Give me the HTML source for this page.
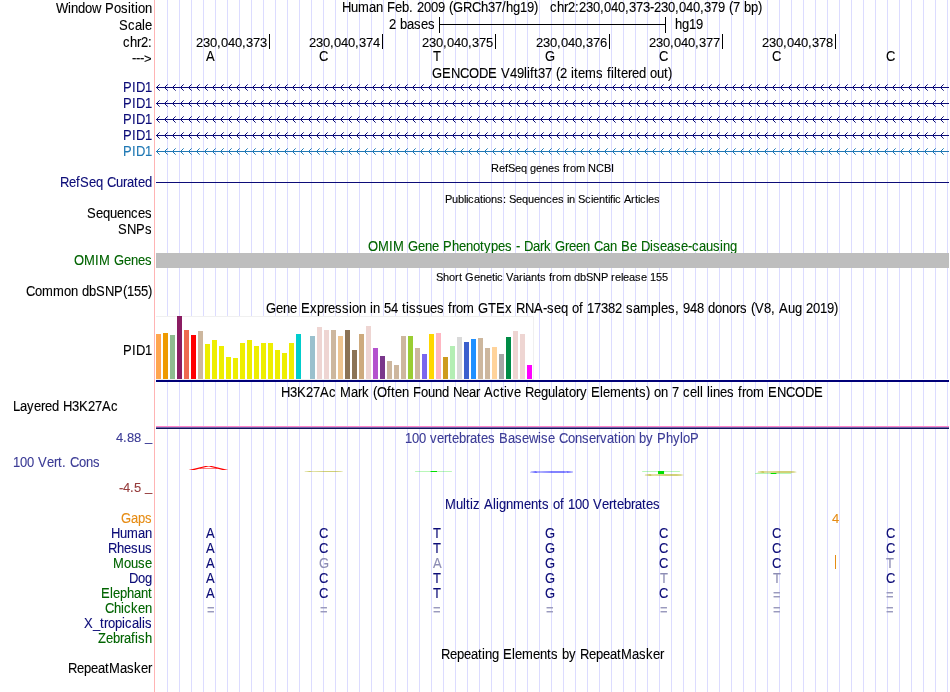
<!DOCTYPE html>
<html><head><meta charset="utf-8"><title>UCSC Genome Browser</title>
<style>html,body{margin:0;padding:0;background:#fff}svg{display:block}#w{width:950px;height:692px;will-change:transform;overflow:hidden}text{font-family:"Liberation Sans",sans-serif;font-size:13px;stroke-width:.1px;white-space:pre}.s{font-size:11px}</style>
</head><body><div id="w">
<svg width="950" height="692" viewBox="0 0 950 692">
<rect width="950" height="692" fill="#fff"/>
<g fill="#dcdcff" shape-rendering="crispEdges">
<rect x="167" y="0" width="1" height="692"/>
<rect x="179" y="0" width="1" height="692"/>
<rect x="191" y="0" width="1" height="692"/>
<rect x="203" y="0" width="1" height="692"/>
<rect x="215" y="0" width="1" height="692"/>
<rect x="227" y="0" width="1" height="692"/>
<rect x="239" y="0" width="1" height="692"/>
<rect x="251" y="0" width="1" height="692"/>
<rect x="263" y="0" width="1" height="692"/>
<rect x="275" y="0" width="1" height="692"/>
<rect x="287" y="0" width="1" height="692"/>
<rect x="299" y="0" width="1" height="692"/>
<rect x="311" y="0" width="1" height="692"/>
<rect x="323" y="0" width="1" height="692"/>
<rect x="335" y="0" width="1" height="692"/>
<rect x="347" y="0" width="1" height="692"/>
<rect x="359" y="0" width="1" height="692"/>
<rect x="371" y="0" width="1" height="692"/>
<rect x="383" y="0" width="1" height="692"/>
<rect x="395" y="0" width="1" height="692"/>
<rect x="407" y="0" width="1" height="692"/>
<rect x="419" y="0" width="1" height="692"/>
<rect x="431" y="0" width="1" height="692"/>
<rect x="443" y="0" width="1" height="692"/>
<rect x="455" y="0" width="1" height="692"/>
<rect x="467" y="0" width="1" height="692"/>
<rect x="479" y="0" width="1" height="692"/>
<rect x="491" y="0" width="1" height="692"/>
<rect x="503" y="0" width="1" height="692"/>
<rect x="515" y="0" width="1" height="692"/>
<rect x="527" y="0" width="1" height="692"/>
<rect x="539" y="0" width="1" height="692"/>
<rect x="551" y="0" width="1" height="692"/>
<rect x="563" y="0" width="1" height="692"/>
<rect x="575" y="0" width="1" height="692"/>
<rect x="587" y="0" width="1" height="692"/>
<rect x="599" y="0" width="1" height="692"/>
<rect x="611" y="0" width="1" height="692"/>
<rect x="623" y="0" width="1" height="692"/>
<rect x="635" y="0" width="1" height="692"/>
<rect x="647" y="0" width="1" height="692"/>
<rect x="659" y="0" width="1" height="692"/>
<rect x="671" y="0" width="1" height="692"/>
<rect x="683" y="0" width="1" height="692"/>
<rect x="695" y="0" width="1" height="692"/>
<rect x="707" y="0" width="1" height="692"/>
<rect x="719" y="0" width="1" height="692"/>
<rect x="731" y="0" width="1" height="692"/>
<rect x="743" y="0" width="1" height="692"/>
<rect x="755" y="0" width="1" height="692"/>
<rect x="767" y="0" width="1" height="692"/>
<rect x="779" y="0" width="1" height="692"/>
<rect x="791" y="0" width="1" height="692"/>
<rect x="803" y="0" width="1" height="692"/>
<rect x="815" y="0" width="1" height="692"/>
<rect x="827" y="0" width="1" height="692"/>
<rect x="839" y="0" width="1" height="692"/>
<rect x="851" y="0" width="1" height="692"/>
<rect x="863" y="0" width="1" height="692"/>
<rect x="875" y="0" width="1" height="692"/>
<rect x="887" y="0" width="1" height="692"/>
<rect x="899" y="0" width="1" height="692"/>
<rect x="911" y="0" width="1" height="692"/>
<rect x="923" y="0" width="1" height="692"/>
<rect x="935" y="0" width="1" height="692"/>
<rect x="947" y="0" width="1" height="692"/>
</g>
<rect x="154" y="0" width="1" height="692" fill="#ffb4b4" shape-rendering="crispEdges"/>
<text transform="translate(56 13) scale(1 1.08)" fill="#000" stroke="#000" x="0 12 15 22 29 36 45 49 58 65 72 75 79 82 89" xml:space="preserve">Window Position</text>
<text transform="translate(119 30) scale(1 1.08)" fill="#000" stroke="#000" x="0 9 16 23 26" xml:space="preserve">Scale</text>
<text transform="translate(123 47) scale(1 1.08)" fill="#000" stroke="#000" x="0 7 14 18 25" xml:space="preserve">chr2:</text>
<text transform="translate(132 63) scale(1 1.0)" fill="#000" stroke="#000" x="0 4 8 12" dy="-0.9 0 0 0.9" xml:space="preserve">---&gt;</text>
<text transform="translate(123 92) scale(1 1.08)" fill="#0c0c78" stroke="#0c0c78" x="0 9 13 22" xml:space="preserve">PID1</text>
<text transform="translate(123 108) scale(1 1.08)" fill="#0c0c78" stroke="#0c0c78" x="0 9 13 22" xml:space="preserve">PID1</text>
<text transform="translate(123 124) scale(1 1.08)" fill="#0c0c78" stroke="#0c0c78" x="0 9 13 22" xml:space="preserve">PID1</text>
<text transform="translate(123 140) scale(1 1.08)" fill="#0c0c78" stroke="#0c0c78" x="0 9 13 22" xml:space="preserve">PID1</text>
<text transform="translate(123 156) scale(1 1.08)" fill="#1f78b4" stroke="#1f78b4" x="0 9 13 22" xml:space="preserve">PID1</text>
<text transform="translate(60 187) scale(1 1.08)" fill="#0c0c78" stroke="#0c0c78" x="0 9 16 20 29 36 43 47 56 63 67 74 78 85" xml:space="preserve">RefSeq Curated</text>
<text transform="translate(87 218) scale(1 1.08)" fill="#000" stroke="#000" x="0 9 16 23 30 37 44 51 58" xml:space="preserve">Sequences</text>
<text transform="translate(118 234) scale(1 1.08)" fill="#000" stroke="#000" x="0 9 18 27" xml:space="preserve">SNPs</text>
<text transform="translate(74 265) scale(1 1.08)" fill="#006400" stroke="#006400" x="0 10 21 25 36 40 50 57 64 71" xml:space="preserve">OMIM Genes</text>
<text transform="translate(26 296) scale(1 1.08)" fill="#000" stroke="#000" x="0 9 16 27 38 45 52 56 63 70 79 88 97 101 108 115 122" xml:space="preserve">Common dbSNP(155)</text>
<text transform="translate(123 355) scale(1 1.08)" fill="#000" stroke="#000" x="0 9 13 22" xml:space="preserve">PID1</text>
<text transform="translate(13 411) scale(1 1.08)" fill="#000" stroke="#000" x="0 7 14 21 28 32 39 46 50 59 66 75 82 89 98" xml:space="preserve">Layered H3K27Ac</text>
<text transform="translate(116 442) scale(1 1.01)" fill="#3c3c96" stroke="#3c3c96" x="0 7 11 18" xml:space="preserve">4.88</text>
<text transform="translate(145 441) scale(1 1.08)" fill="#3c3c96" stroke="#3c3c96" x="0" xml:space="preserve">_</text>
<text transform="translate(13 467) scale(1 1.08)" fill="#3c3c96" stroke="#3c3c96" x="0 7 14 21 25 34 41 45 49 53 57 66 73 80" xml:space="preserve">100 Vert. Cons</text>
<text transform="translate(119 492) scale(1 1.01)" fill="#963c3c" stroke="#963c3c" x="0 4 11 15" xml:space="preserve">-4.5</text>
<text transform="translate(145 491) scale(1 1.08)" fill="#963c3c" stroke="#963c3c" x="0" xml:space="preserve">_</text>
<text transform="translate(121 523) scale(1 1.08)" fill="#e68c14" stroke="#e68c14" x="0 10 17 24" xml:space="preserve">Gaps</text>
<text transform="translate(111 538) scale(1 1.08)" fill="#0c0c78" stroke="#0c0c78" x="0 9 16 27 34" xml:space="preserve">Human</text>
<text transform="translate(108 553) scale(1 1.08)" fill="#0c0c78" stroke="#0c0c78" x="0 9 16 23 30 37" xml:space="preserve">Rhesus</text>
<text transform="translate(113 568) scale(1 1.08)" fill="#006400" stroke="#006400" x="0 11 18 25 32" xml:space="preserve">Mouse</text>
<text transform="translate(129 583) scale(1 1.08)" fill="#0c0c78" stroke="#0c0c78" x="0 9 16" xml:space="preserve">Dog</text>
<text transform="translate(101 598) scale(1 1.08)" fill="#006400" stroke="#006400" x="0 9 12 19 26 33 40 47" xml:space="preserve">Elephant</text>
<text transform="translate(105 613) scale(1 1.08)" fill="#006400" stroke="#006400" x="0 9 16 19 26 33 40" xml:space="preserve">Chicken</text>
<text transform="translate(84 628) scale(1 1.08)" fill="#0c0c78" stroke="#0c0c78" x="0 9 16 20 24 31 38 41 48 55 58 61" xml:space="preserve">X_tropicalis</text>
<text transform="translate(98 643) scale(1 1.08)" fill="#006400" stroke="#006400" x="0 8 15 22 26 33 37 40 47" xml:space="preserve">Zebrafish</text>
<text transform="translate(68 673) scale(1 1.08)" fill="#000" stroke="#000" x="0 9 16 23 30 37 41 52 59 66 73 80" xml:space="preserve">RepeatMasker</text>
<text transform="translate(342 12) scale(1 1.08)" fill="#000" stroke="#000" x="0 9 16 27 34 41 45 53 60 67 71 75 82 89 96 103 107 111 121 130 139 146 153 160 164 171 178 185 192" xml:space="preserve">Human Feb. 2009 (GRCh37/hg19)</text>
<text transform="translate(550 12) scale(1 1.08)" fill="#000" stroke="#000" x="0 7 14 18 25 29 36 43 50 54 61 68 75 79 86 93 100 104 111 118 125 129 136 143 150 154 161 168 175 179 183 190 194 201 208" xml:space="preserve">chr2:230,040,373-230,040,379 (7 bp)</text>
<text transform="translate(432 78) scale(1 1.08)" fill="#000" stroke="#000" x="0 10 19 28 37 47 56 65 69 78 85 92 95 98 102 106 113 120 124 128 135 139 142 146 153 164 171 175 179 182 185 189 196 200 207 214 218 225 232 236" xml:space="preserve">GENCODE V49lift37 (2 items filtered out)</text>
<text transform="translate(491 172) scale(1 1.0)" fill="#000" stroke="#000" class="s" x="0 8 14 17 24 30 36 39 45 51 57 63 69 72 75 79 85 94 97 105 113 120" xml:space="preserve">RefSeq genes from NCBI</text>
<text transform="translate(445 203) scale(1 1.0)" fill="#000" stroke="#000" class="s" x="0 7 13 19 21 23 29 35 38 40 46 52 58 61 64 71 77 83 89 95 101 107 113 119 122 124 130 133 140 146 148 154 160 163 165 168 170 176 179 186 190 193 195 201 203 209" xml:space="preserve">Publications: Sequences in Scientific Articles</text>
<text transform="translate(368 251) scale(1 1.08)" fill="#006400" stroke="#006400" x="0 10 21 25 36 40 50 57 64 71 75 84 91 98 105 112 116 123 130 137 144 148 152 156 165 172 176 183 187 197 201 208 215 222 226 235 242 249 253 262 269 273 282 285 292 299 306 313 320 324 331 338 345 352 355 362" xml:space="preserve">OMIM Gene Phenotypes - Dark Green Can Be Disease-causing</text>
<text transform="translate(436 281) scale(1 1.0)" fill="#000" stroke="#000" class="s" x="0 7 13 19 23 26 29 38 44 50 56 59 61 67 70 77 83 87 89 95 101 104 110 113 116 120 126 135 138 144 150 157 165 172 175 179 185 187 193 199 205 211 214 220 226" xml:space="preserve">Short Genetic Variants from dbSNP release 155</text>
<text transform="translate(266 313) scale(1 1.08)" fill="#000" stroke="#000" x="0 10 17 24 31 35 44 51 58 62 69 76 83 86 93 100 104 107 114 118 125 132 136 140 143 150 157 164 171 178 182 186 190 197 208 212 222 230 239 246 250 259 268 277 281 288 295 302 306 313 317 321 328 335 342 349 356 360 367 374 385 392 395 402 409 413 417 424 431 438 442 449 456 463 470 474 481 485 489 498 505 509 513 522 529 536 540 547 554 561 568" xml:space="preserve">Gene Expression in 54 tissues from GTEx RNA-seq of 17382 samples, 948 donors (V8, Aug 2019)</text>
<text transform="translate(281 397) scale(1 1.08)" fill="#000" stroke="#000" x="0 9 16 25 32 39 48 55 59 70 77 81 88 92 96 106 110 114 121 128 132 140 147 154 161 168 172 181 188 195 199 203 212 219 223 226 233 240 244 253 260 267 274 277 284 288 295 299 306 310 319 322 329 340 347 354 358 365 369 373 380 387 391 398 402 409 416 419 422 426 429 432 439 446 453 457 461 465 472 483 487 496 505 514 524 533" xml:space="preserve">H3K27Ac Mark (Often Found Near Active Regulatory Elements) on 7 cell lines from ENCODE</text>
<text transform="translate(405 443) scale(1 1.08)" fill="#3c3c96" stroke="#3c3c96" x="0 7 14 21 25 32 39 43 47 54 61 65 72 76 83 90 94 103 110 117 124 133 136 143 150 154 163 170 177 184 191 195 202 209 213 216 223 230 234 241 248 252 261 268 275 278 285" xml:space="preserve">100 vertebrates Basewise Conservation by PhyloP</text>
<text transform="translate(445 509) scale(1 1.08)" fill="#0c0c78" stroke="#0c0c78" x="0 11 18 21 25 28 35 39 48 51 54 61 68 79 86 93 97 104 108 115 119 123 130 137 144 148 157 164 168 172 179 186 190 197 201 208" xml:space="preserve">Multiz Alignments of 100 Vertebrates</text>
<text transform="translate(441 659) scale(1 1.08)" fill="#000" stroke="#000" x="0 9 16 23 30 37 41 44 51 58 62 71 74 81 92 99 106 110 117 121 128 135 139 148 155 162 169 176 180 191 198 205 212 219" xml:space="preserve">Repeating Elements by RepeatMasker</text>
<text transform="translate(389 29) scale(1 1.08)" fill="#000" stroke="#000" x="0 7 11 18 25 32 39" xml:space="preserve">2 bases</text>
<text transform="translate(675 29) scale(1 1.08)" fill="#000" stroke="#000" x="0 7 14 21" xml:space="preserve">hg19</text>
<g fill="#000" shape-rendering="crispEdges">
<rect x="439" y="17" width="1" height="16"/><rect x="665" y="17" width="1" height="16"/><rect x="439" y="24" width="227" height="1"/>
<rect x="269" y="34" width="1" height="15"/>
<rect x="382" y="34" width="1" height="15"/>
<rect x="495" y="34" width="1" height="15"/>
<rect x="609" y="34" width="1" height="15"/>
<rect x="722" y="34" width="1" height="15"/>
<rect x="835" y="34" width="1" height="15"/>
</g>
<text transform="translate(196 47) scale(1 1.01)" fill="#000" stroke="#000" x="0 7 14 21 25 32 39 46 50 57 64" xml:space="preserve">230,040,373</text>
<text transform="translate(309 47) scale(1 1.01)" fill="#000" stroke="#000" x="0 7 14 21 25 32 39 46 50 57 64" xml:space="preserve">230,040,374</text>
<text transform="translate(422 47) scale(1 1.01)" fill="#000" stroke="#000" x="0 7 14 21 25 32 39 46 50 57 64" xml:space="preserve">230,040,375</text>
<text transform="translate(536 47) scale(1 1.01)" fill="#000" stroke="#000" x="0 7 14 21 25 32 39 46 50 57 64" xml:space="preserve">230,040,376</text>
<text transform="translate(649 47) scale(1 1.01)" fill="#000" stroke="#000" x="0 7 14 21 25 32 39 46 50 57 64" xml:space="preserve">230,040,377</text>
<text transform="translate(762 47) scale(1 1.01)" fill="#000" stroke="#000" x="0 7 14 21 25 32 39 46 50 57 64" xml:space="preserve">230,040,378</text>
<text transform="translate(206 61) scale(1 1.08)" fill="#000" stroke="#000" x="0" xml:space="preserve">A</text>
<text transform="translate(319 61) scale(1 1.08)" fill="#000" stroke="#000" x="0" xml:space="preserve">C</text>
<text transform="translate(433 61) scale(1 1.08)" fill="#000" stroke="#000" x="0" xml:space="preserve">T</text>
<text transform="translate(545 61) scale(1 1.08)" fill="#000" stroke="#000" x="0" xml:space="preserve">G</text>
<text transform="translate(659 61) scale(1 1.08)" fill="#000" stroke="#000" x="0" xml:space="preserve">C</text>
<text transform="translate(772 61) scale(1 1.08)" fill="#000" stroke="#000" x="0" xml:space="preserve">C</text>
<text transform="translate(886 61) scale(1 1.08)" fill="#000" stroke="#000" x="0" xml:space="preserve">C</text>
<pattern id="c1" x="156" y="84" width="8" height="7" patternUnits="userSpaceOnUse"><path d="M0 3h1v1h-1zM1 2h1v1h-1zM2 1h1v1h-1zM1 4h1v1h-1zM2 5h1v1h-1z" fill="#0c0c78" shape-rendering="crispEdges"/><path d="M3 0h1v1h-1zM3 6h1v1h-1z" fill="#0c0c78" fill-opacity=".65" shape-rendering="crispEdges"/></pattern>
<rect x="156" y="84" width="792" height="7" fill="url(#c1)" shape-rendering="crispEdges"/>
<rect x="156" y="87" width="793" height="1" fill="#0c0c78" shape-rendering="crispEdges"/>
<pattern id="c2" x="156" y="100" width="8" height="7" patternUnits="userSpaceOnUse"><path d="M0 3h1v1h-1zM1 2h1v1h-1zM2 1h1v1h-1zM1 4h1v1h-1zM2 5h1v1h-1z" fill="#0c0c78" shape-rendering="crispEdges"/><path d="M3 0h1v1h-1zM3 6h1v1h-1z" fill="#0c0c78" fill-opacity=".65" shape-rendering="crispEdges"/></pattern>
<rect x="156" y="100" width="792" height="7" fill="url(#c2)" shape-rendering="crispEdges"/>
<rect x="156" y="103" width="793" height="1" fill="#0c0c78" shape-rendering="crispEdges"/>
<pattern id="c3" x="156" y="116" width="8" height="7" patternUnits="userSpaceOnUse"><path d="M0 3h1v1h-1zM1 2h1v1h-1zM2 1h1v1h-1zM1 4h1v1h-1zM2 5h1v1h-1z" fill="#0c0c78" shape-rendering="crispEdges"/><path d="M3 0h1v1h-1zM3 6h1v1h-1z" fill="#0c0c78" fill-opacity=".65" shape-rendering="crispEdges"/></pattern>
<rect x="156" y="116" width="792" height="7" fill="url(#c3)" shape-rendering="crispEdges"/>
<rect x="156" y="119" width="793" height="1" fill="#0c0c78" shape-rendering="crispEdges"/>
<pattern id="c4" x="156" y="132" width="8" height="7" patternUnits="userSpaceOnUse"><path d="M0 3h1v1h-1zM1 2h1v1h-1zM2 1h1v1h-1zM1 4h1v1h-1zM2 5h1v1h-1z" fill="#0c0c78" shape-rendering="crispEdges"/><path d="M3 0h1v1h-1zM3 6h1v1h-1z" fill="#0c0c78" fill-opacity=".65" shape-rendering="crispEdges"/></pattern>
<rect x="156" y="132" width="792" height="7" fill="url(#c4)" shape-rendering="crispEdges"/>
<rect x="156" y="135" width="793" height="1" fill="#0c0c78" shape-rendering="crispEdges"/>
<pattern id="c5" x="156" y="148" width="8" height="7" patternUnits="userSpaceOnUse"><path d="M0 3h1v1h-1zM1 2h1v1h-1zM2 1h1v1h-1zM1 4h1v1h-1zM2 5h1v1h-1z" fill="#1f78b4" shape-rendering="crispEdges"/><path d="M3 0h1v1h-1zM3 6h1v1h-1z" fill="#1f78b4" fill-opacity=".65" shape-rendering="crispEdges"/></pattern>
<rect x="156" y="148" width="792" height="7" fill="url(#c5)" shape-rendering="crispEdges"/>
<rect x="156" y="151" width="793" height="1" fill="#1f78b4" shape-rendering="crispEdges"/>
<rect x="156" y="182" width="793" height="1" fill="#0c0c78" shape-rendering="crispEdges"/>
<rect x="156" y="253" width="793" height="15" fill="#bebebe" shape-rendering="crispEdges"/>
<g shape-rendering="crispEdges">
<rect x="156" y="316" width="378" height="64" fill="#fff"/>
<rect x="156" y="316" width="378" height="1" fill="#f0f0f0"/><rect x="533" y="316" width="1" height="64" fill="#f0f0f0"/>
<rect x="156" y="334" width="5" height="45" fill="#FFA54F"/>
<rect x="163" y="333" width="5" height="46" fill="#EE9A00"/>
<rect x="170" y="335" width="5" height="44" fill="#8FBC8F"/>
<rect x="177" y="316" width="5" height="63" fill="#8B1C62"/>
<rect x="184" y="330" width="5" height="49" fill="#EE6A50"/>
<rect x="191" y="335" width="5" height="44" fill="#FF0000"/>
<rect x="198" y="331" width="5" height="48" fill="#CDB79E"/>
<rect x="205" y="344" width="5" height="35" fill="#EEEE00"/>
<rect x="212" y="340" width="5" height="39" fill="#EEEE00"/>
<rect x="219" y="346" width="5" height="33" fill="#EEEE00"/>
<rect x="226" y="357" width="5" height="22" fill="#EEEE00"/>
<rect x="233" y="358" width="5" height="21" fill="#EEEE00"/>
<rect x="240" y="343" width="5" height="36" fill="#EEEE00"/>
<rect x="247" y="340" width="5" height="39" fill="#EEEE00"/>
<rect x="254" y="346" width="5" height="33" fill="#EEEE00"/>
<rect x="261" y="343" width="5" height="36" fill="#EEEE00"/>
<rect x="268" y="343" width="5" height="36" fill="#EEEE00"/>
<rect x="275" y="350" width="5" height="29" fill="#EEEE00"/>
<rect x="282" y="353" width="5" height="26" fill="#EEEE00"/>
<rect x="289" y="343" width="5" height="36" fill="#EEEE00"/>
<rect x="296" y="334" width="5" height="45" fill="#00CDCD"/>
<rect x="310" y="336" width="5" height="43" fill="#9AC0CD"/>
<rect x="317" y="327" width="5" height="52" fill="#EED5D2"/>
<rect x="324" y="330" width="5" height="49" fill="#EED5D2"/>
<rect x="331" y="330" width="5" height="49" fill="#CDB79E"/>
<rect x="338" y="336" width="5" height="43" fill="#EEC591"/>
<rect x="345" y="330" width="5" height="49" fill="#8B7355"/>
<rect x="352" y="350" width="5" height="29" fill="#8B7355"/>
<rect x="359" y="334" width="5" height="45" fill="#CDAA7D"/>
<rect x="366" y="326" width="5" height="53" fill="#EED5D2"/>
<rect x="373" y="348" width="5" height="31" fill="#B452CD"/>
<rect x="380" y="356" width="5" height="23" fill="#7A378B"/>
<rect x="387" y="361" width="5" height="18" fill="#CDB79E"/>
<rect x="394" y="365" width="5" height="14" fill="#CDB79E"/>
<rect x="401" y="336" width="5" height="43" fill="#CDB79E"/>
<rect x="408" y="336" width="5" height="43" fill="#9ACD32"/>
<rect x="415" y="348" width="5" height="31" fill="#CDB79E"/>
<rect x="422" y="354" width="5" height="25" fill="#7A67EE"/>
<rect x="429" y="334" width="5" height="45" fill="#FFD700"/>
<rect x="436" y="333" width="5" height="46" fill="#FFB6C1"/>
<rect x="443" y="357" width="5" height="22" fill="#CD9B1D"/>
<rect x="450" y="346" width="5" height="33" fill="#B4EEB4"/>
<rect x="457" y="337" width="5" height="42" fill="#D9D9D9"/>
<rect x="464" y="342" width="5" height="37" fill="#3A5FCD"/>
<rect x="471" y="339" width="5" height="40" fill="#1E90FF"/>
<rect x="478" y="338" width="5" height="41" fill="#CDB79E"/>
<rect x="485" y="348" width="5" height="31" fill="#CDB79E"/>
<rect x="492" y="347" width="5" height="32" fill="#FFD39B"/>
<rect x="499" y="354" width="5" height="25" fill="#A6A6A6"/>
<rect x="506" y="337" width="5" height="42" fill="#008B45"/>
<rect x="513" y="331" width="5" height="48" fill="#EED5D2"/>
<rect x="520" y="334" width="5" height="45" fill="#EED5D2"/>
<rect x="527" y="365" width="5" height="14" fill="#FF00FF"/>
<rect x="156" y="379" width="793" height="1" fill="#fff"/><rect x="156" y="379" width="378" height="1" fill="#f0f0f0"/><rect x="156" y="380" width="793" height="2" fill="#000078"/>
<rect x="156" y="426" width="793" height="1" fill="#ff82c8"/><rect x="156" y="427" width="793" height="1" fill="#6e64aa"/><rect x="156" y="428" width="793" height="1" fill="#14145a"/>
</g>
<text transform="translate(188.50 470.00) scale(0.5985 0.0580)" style="font-size:100px" fill="#ff0000" stroke="#ff0000" stroke-width="4">A</text>
<text transform="translate(301.37 471.98) scale(0.6268 0.0155)" style="font-size:100px" fill="#aaaa00">C</text>
<text transform="translate(413.68 472.00) scale(0.6579 0.0158)" style="font-size:100px" fill="#00e000">T</text>
<text transform="translate(526.72 472.78) scale(0.6565 0.0225)" style="font-size:100px" fill="#0000ff">G</text>
<text transform="translate(526.72 472.39) scale(0.6565 0.0113)" style="font-size:100px" fill="#0000ff">G</text>
<text transform="translate(640.67 474.00) scale(0.6667 0.0432)" style="font-size:100px" fill="#00e000">T</text>
<text transform="translate(641.39 475.78) scale(0.6220 0.0225)" style="font-size:100px" fill="#aaaa00">C</text>
<text transform="translate(641.39 475.39) scale(0.6220 0.0113)" style="font-size:100px" fill="#aaaa00">C</text>
<text transform="translate(754.35 472.68) scale(0.6299 0.0225)" style="font-size:100px" fill="#aaaa00">C</text>
<text transform="translate(754.35 472.29) scale(0.6299 0.0113)" style="font-size:100px" fill="#aaaa00">C</text>
<text transform="translate(753.70 474.00) scale(0.6491 0.0144)" style="font-size:100px" fill="#00e000">T</text>
<text transform="translate(206 538) scale(1 1.08)" fill="#0c0c78" stroke="#0c0c78" x="0" xml:space="preserve">A</text>
<text transform="translate(319 538) scale(1 1.08)" fill="#0c0c78" stroke="#0c0c78" x="0" xml:space="preserve">C</text>
<text transform="translate(433 538) scale(1 1.08)" fill="#0c0c78" stroke="#0c0c78" x="0" xml:space="preserve">T</text>
<text transform="translate(545 538) scale(1 1.08)" fill="#0c0c78" stroke="#0c0c78" x="0" xml:space="preserve">G</text>
<text transform="translate(659 538) scale(1 1.08)" fill="#0c0c78" stroke="#0c0c78" x="0" xml:space="preserve">C</text>
<text transform="translate(772 538) scale(1 1.08)" fill="#0c0c78" stroke="#0c0c78" x="0" xml:space="preserve">C</text>
<text transform="translate(886 538) scale(1 1.08)" fill="#0c0c78" stroke="#0c0c78" x="0" xml:space="preserve">C</text>
<text transform="translate(206 553) scale(1 1.08)" fill="#0c0c78" stroke="#0c0c78" x="0" xml:space="preserve">A</text>
<text transform="translate(319 553) scale(1 1.08)" fill="#0c0c78" stroke="#0c0c78" x="0" xml:space="preserve">C</text>
<text transform="translate(433 553) scale(1 1.08)" fill="#0c0c78" stroke="#0c0c78" x="0" xml:space="preserve">T</text>
<text transform="translate(545 553) scale(1 1.08)" fill="#0c0c78" stroke="#0c0c78" x="0" xml:space="preserve">G</text>
<text transform="translate(659 553) scale(1 1.08)" fill="#0c0c78" stroke="#0c0c78" x="0" xml:space="preserve">C</text>
<text transform="translate(772 553) scale(1 1.08)" fill="#0c0c78" stroke="#0c0c78" x="0" xml:space="preserve">C</text>
<text transform="translate(886 553) scale(1 1.08)" fill="#0c0c78" stroke="#0c0c78" x="0" xml:space="preserve">C</text>
<text transform="translate(206 568) scale(1 1.08)" fill="#0c0c78" stroke="#0c0c78" x="0" xml:space="preserve">A</text>
<text transform="translate(319 568) scale(1 1.08)" fill="#8c8cb4" stroke="#8c8cb4" x="0" xml:space="preserve">G</text>
<text transform="translate(433 568) scale(1 1.08)" fill="#8c8cb4" stroke="#8c8cb4" x="0" xml:space="preserve">A</text>
<text transform="translate(545 568) scale(1 1.08)" fill="#0c0c78" stroke="#0c0c78" x="0" xml:space="preserve">G</text>
<text transform="translate(659 568) scale(1 1.08)" fill="#0c0c78" stroke="#0c0c78" x="0" xml:space="preserve">C</text>
<text transform="translate(772 568) scale(1 1.08)" fill="#0c0c78" stroke="#0c0c78" x="0" xml:space="preserve">C</text>
<text transform="translate(886 568) scale(1 1.08)" fill="#8c8cb4" stroke="#8c8cb4" x="0" xml:space="preserve">T</text>
<text transform="translate(206 583) scale(1 1.08)" fill="#0c0c78" stroke="#0c0c78" x="0" xml:space="preserve">A</text>
<text transform="translate(319 583) scale(1 1.08)" fill="#0c0c78" stroke="#0c0c78" x="0" xml:space="preserve">C</text>
<text transform="translate(433 583) scale(1 1.08)" fill="#0c0c78" stroke="#0c0c78" x="0" xml:space="preserve">T</text>
<text transform="translate(545 583) scale(1 1.08)" fill="#0c0c78" stroke="#0c0c78" x="0" xml:space="preserve">G</text>
<text transform="translate(660 583) scale(1 1.08)" fill="#8c8cb4" stroke="#8c8cb4" x="0" xml:space="preserve">T</text>
<text transform="translate(773 583) scale(1 1.08)" fill="#8c8cb4" stroke="#8c8cb4" x="0" xml:space="preserve">T</text>
<text transform="translate(886 583) scale(1 1.08)" fill="#0c0c78" stroke="#0c0c78" x="0" xml:space="preserve">C</text>
<text transform="translate(206 598) scale(1 1.08)" fill="#0c0c78" stroke="#0c0c78" x="0" xml:space="preserve">A</text>
<text transform="translate(319 598) scale(1 1.08)" fill="#0c0c78" stroke="#0c0c78" x="0" xml:space="preserve">C</text>
<text transform="translate(433 598) scale(1 1.08)" fill="#0c0c78" stroke="#0c0c78" x="0" xml:space="preserve">T</text>
<text transform="translate(545 598) scale(1 1.08)" fill="#0c0c78" stroke="#0c0c78" x="0" xml:space="preserve">G</text>
<text transform="translate(659 598) scale(1 1.08)" fill="#0c0c78" stroke="#0c0c78" x="0" xml:space="preserve">C</text>
<text transform="translate(773 600) scale(1 1.08)" fill="#9a9abe" stroke="#9a9abe" x="0" xml:space="preserve">=</text>
<text transform="translate(886 600) scale(1 1.08)" fill="#9a9abe" stroke="#9a9abe" x="0" xml:space="preserve">=</text>
<text transform="translate(207 615) scale(1 1.08)" fill="#9a9abe" stroke="#9a9abe" x="0" xml:space="preserve">=</text>
<text transform="translate(320 615) scale(1 1.08)" fill="#9a9abe" stroke="#9a9abe" x="0" xml:space="preserve">=</text>
<text transform="translate(433 615) scale(1 1.08)" fill="#9a9abe" stroke="#9a9abe" x="0" xml:space="preserve">=</text>
<text transform="translate(546 615) scale(1 1.08)" fill="#9a9abe" stroke="#9a9abe" x="0" xml:space="preserve">=</text>
<text transform="translate(660 615) scale(1 1.08)" fill="#9a9abe" stroke="#9a9abe" x="0" xml:space="preserve">=</text>
<text transform="translate(773 615) scale(1 1.08)" fill="#9a9abe" stroke="#9a9abe" x="0" xml:space="preserve">=</text>
<text transform="translate(886 615) scale(1 1.08)" fill="#9a9abe" stroke="#9a9abe" x="0" xml:space="preserve">=</text>
<text transform="translate(832 523) scale(1 1.01)" fill="#e68c14" stroke="#e68c14" x="0" xml:space="preserve">4</text>
<rect x="835" y="555" width="1" height="14" fill="#e68c14" shape-rendering="crispEdges"/>
</svg></div></body></html>
